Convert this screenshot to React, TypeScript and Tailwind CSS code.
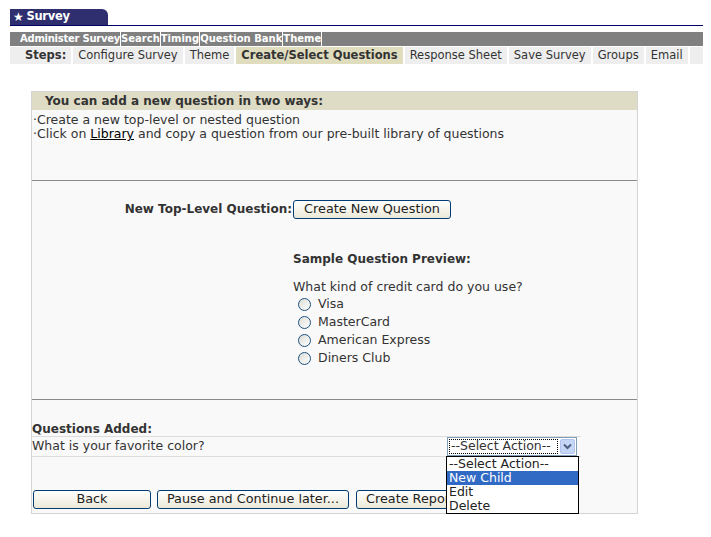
import React from "react";

const F = { fontFamily: '"DejaVu Sans", Verdana, sans-serif' };

function XPButton({ children, className = "" }: { children: React.ReactNode; className?: string }) {
  return (
    <div
      className={
        "h-[19px] flex items-center justify-center rounded-[3px] border border-[#003c74] bg-gradient-to-b from-white to-[#ece9d8] text-[12.8px] text-[#222] leading-none whitespace-nowrap overflow-hidden " +
        className
      }
    >
      {children}
    </div>
  );
}

function Radio({ label }: { label: string }) {
  return (
    <div className="flex items-center h-[18px]">
      <span className="ml-[5px] w-[13px] h-[13px] rounded-full border border-[#1c5180] bg-gradient-to-br from-[#dcdcd6] to-white" />
      <span className="ml-[7px] text-[12.5px] text-[#333]">{label}</span>
    </div>
  );
}

export default function App() {
  const steps = [
    { t: "Configure Survey" },
    { t: "Theme" },
    { t: "Create/Select Questions", active: true },
    { t: "Response Sheet" },
    { t: "Save Survey" },
    { t: "Groups" },
    { t: "Email" },
  ];
  const topLinks = ["Administer Survey", "Search", "Timing", "Question Bank", "Theme"];
  return (
    <div className="w-[711px] h-[537px] bg-white overflow-hidden" style={F}>
      <div className="pl-[10px] pr-[8px] pt-[9px]">
        <div className="w-[98px] h-[16px] bg-[#2f2f6f] rounded-tr-[6px] flex items-center pl-[3px] text-white text-[11.5px] font-bold leading-none tracking-[-0.3px]">
          <span className="text-[12px] mr-[3px]">★</span>Survey
        </div>
        <div className="h-px bg-[#000066]" />
        <div className="mt-[6px] h-[14px] bg-[#808080] flex items-center pl-[10px] text-white text-[10px] font-bold leading-none">
          {topLinks.map((l, i) => (
            <span
              key={i}
              className={"border-r border-white h-[14px] flex items-center " + (i === 0 ? "tracking-[-0.25px]" : "")}
            >
              {l}
            </span>
          ))}
        </div>
        <div className="mt-px h-[17px] flex gap-[2px] text-[11.5px] leading-none text-[#333]">
          <div className="bg-[#eeeeee] flex items-center pl-[15px] pr-[5px] font-bold">Steps:</div>
          {steps.map((s, i) => (
            <div
              key={i}
              className={
                "flex items-center px-[5px] whitespace-nowrap " + (s.active ? "bg-[#e0ddbf] font-bold" : "bg-[#eeeeee]")
              }
            >
              {s.t}
            </div>
          ))}
          <div className="flex-1 bg-[#eeeeee]" />
        </div>
      </div>

      <div className="relative ml-[31px] mt-[27px] w-[607px] border border-[#d4d4d4] bg-[#f9f9f9]">
        <div className="h-[18px] bg-[#dedcc4] flex items-center pl-[13px] text-[12px] font-bold text-[#333] leading-none">
          You can add a new question in two ways:
        </div>
        <div className="pl-[1px] pt-[3px] text-[12.5px] text-[#333] leading-[14px]">
          <div>·Create a new top-level or nested question</div>
          <div>
            ·Click on <span className="underline text-black">Library</span> and copy a question from our pre-built
            library of questions
          </div>
        </div>
        <div className="mt-[39px] border-t border-[#8a8a8a]" />
        <div className="flex mt-[19px]">
          <div className="w-[260px] text-right pt-[2px] text-[12px] font-bold text-[#333] leading-[14px]">
            New Top-Level Question:
          </div>
          <div className="ml-[1px]">
            <XPButton className="w-[158px]">Create New Question</XPButton>
            <div className="mt-[31px] text-[12px] font-bold text-[#333]">Sample Question Preview:</div>
            <div className="mt-[12px] text-[12.5px] text-[#333] leading-[14px]">What kind of credit card do you use?</div>
            <div className="mt-px">
              <Radio label="Visa" />
              <Radio label="MasterCard" />
              <Radio label="American Express" />
              <Radio label="Diners Club" />
            </div>
          </div>
        </div>
        <div className="mt-[32px] border-t border-[#8a8a8a]" />
        <div className="mt-[22px] text-[12px] font-bold text-[#333] leading-[14px]">Questions Added:</div>
        <div className="w-[549px] h-[21px] border-y border-[#dddddd] flex items-center justify-between">
          <span className="text-[12.5px] text-[#333]">What is your favorite color?</span>
          <div className="mr-[4px] w-[130px] h-[19px] bg-white border border-[#7f9db9] flex items-center p-px">
            <div className="flex-1 h-full border border-dotted border-black flex items-center pl-px text-[12.5px] text-[#333] leading-none whitespace-nowrap overflow-hidden">
              --Select Action--
            </div>
            <div className="ml-[2px] w-[15px] h-full bg-[#c6d6f7] border border-[#b0c4ee] rounded-[2px] flex items-center justify-center">
              <svg width="9" height="7" viewBox="0 0 9 7">
                <path d="M1 1.5 L4.5 5 L8 1.5" stroke="#4d6185" strokeWidth="2" fill="none" />
              </svg>
            </div>
          </div>
        </div>
        <div className="mt-[33px] mb-[4px] flex pl-[1px]">
          <XPButton className="w-[118px]">Back</XPButton>
          <XPButton className="ml-[6px] w-[192px]">Pause and Continue later...</XPButton>
          <XPButton className="ml-[7px] w-[120px] justify-start pl-[9px]">Create Report</XPButton>
        </div>
        <div className="absolute left-[414px] top-[364px] w-[133px] bg-white border border-black text-[12.5px] text-[#222] leading-[14px]">
          <div className="pl-[2px]">--Select Action--</div>
          <div className="pl-[2px] bg-[#316ac5] text-white">New Child</div>
          <div className="pl-[2px]">Edit</div>
          <div className="pl-[2px]">Delete</div>
        </div>
      </div>
    </div>
  );
}
